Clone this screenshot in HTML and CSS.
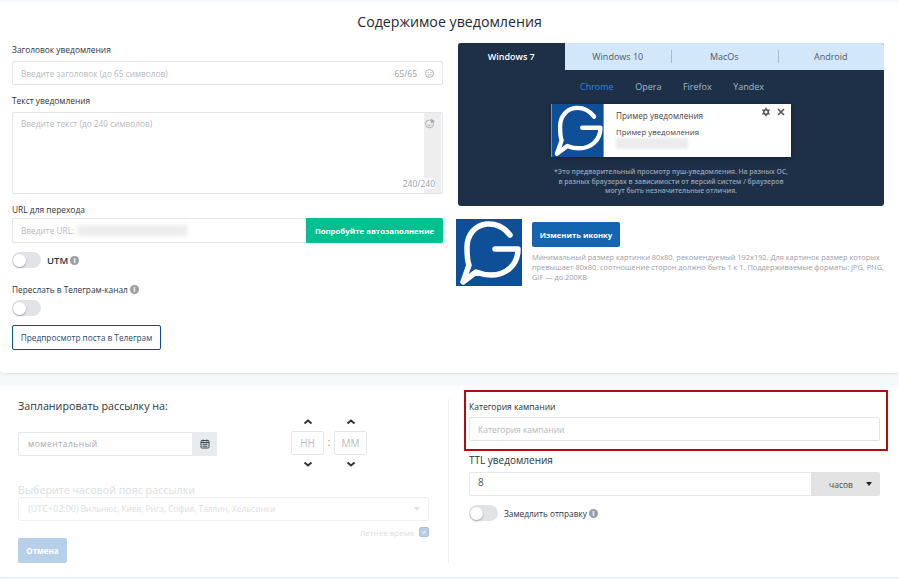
FILE: index.html
```html
<!DOCTYPE html>
<html lang="ru">
<head>
<meta charset="utf-8">
<title>Содержимое уведомления</title>
<link rel="stylesheet" href="styles.css">
</head>
<body>
<svg class="defs" width="0" height="0" aria-hidden="true">
  <symbol id="logo" viewBox="0 0 66 67">
    <rect width="66" height="67" fill="#0f4f98"/>
    <path d="M54 16C48 8 40 4.500 31 5C19 6 11 16 11 28C11 35 11 41 13 46L7 63L20 53C25 55 30 56 35 56C50 56 62 46 62 30L39 30" fill="none" stroke="#fff" stroke-width="5.500" stroke-linejoin="round" stroke-linecap="round"/>
  </symbol>
</svg>
<main class="page">
  <section class="card card-top">
    <h1 class="title">Содержимое уведомления</h1>
    <div class="top-grid">
      <div class="left">
        <label class="lbl lbl-first">Заголовок уведомления</label>
        <div class="field field-title">
          <span class="ph">Введите заголовок (до 65 символов)</span>
          <span class="count">65/65</span>
          <svg class="smile" viewBox="0 0 12 12"><circle cx="6" cy="6" r="4.300" fill="none" stroke="#a9a9a9"/><circle cx="4.500" cy="5" r=".7" fill="#a9a9a9"/><circle cx="7.500" cy="5" r=".7" fill="#a9a9a9"/><path d="M4 7.500h4" stroke="#a9a9a9"/></svg>
        </div>
        <label class="lbl lbl-text">Текст уведомления</label>
        <div class="field-area">
          <span class="ph area-ph">Введите текст (до 240 символов)</span>
          <div class="area-side">
            <svg class="smile" viewBox="0 0 12 12"><circle cx="6" cy="6.500" r="4.300" fill="none" stroke="#a9a9a9"/><path d="M4 8h4" stroke="#a9a9a9"/><path d="M7.500 .5L12 3.500L7.500 6z" fill="#a9a9a9"/></svg>
          </div>
          <span class="count area-count">240/240</span>
        </div>
        <label class="lbl lbl-url">URL для перехода</label>
        <div class="url-group">
          <div class="url-input"><span class="ph">Введите URL:</span><span class="blur-url"></span></div>
          <button class="btn-green">Попробуйте автозаполнение</button>
        </div>
        <div class="row row-utm">
          <span class="toggle"></span>
          <span class="utm">UTM</span>
          <span class="info">i</span>
        </div>
        <div class="row row-tg"><span class="lbl-plain">Переслать в Телеграм-канал</span><span class="info">i</span></div>
        <span class="toggle toggle-tg"></span>
        <button class="btn-outline">Предпросмотр поста в Телеграм</button>
      </div>
      <div class="right">
        <div class="preview">
          <div class="tabs">
            <span class="tab tab-active">Windows 7</span>
            <span class="tab">Windows 10</span>
            <span class="tab tab-sep">MacOs</span>
            <span class="tab tab-sep">Android</span>
          </div>
          <div class="browsers">
            <span class="browser browser-active">Chrome</span>
            <span class="browser">Opera</span>
            <span class="browser">Firefox</span>
            <span class="browser">Yandex</span>
          </div>
          <div class="push">
            <svg class="push-logo"><use href="#logo"/></svg>
            <div class="push-body">
              <div class="push-title">Пример уведомления</div>
              <div class="push-text">Пример уведомления</div>
              <div class="push-blur"></div>
            </div>
            <div class="push-icons">
              <svg class="gear" viewBox="0 0 10 10"><circle cx="5" cy="5" r="2.300" fill="none" stroke="#555" stroke-width="1.600"/><path d="M5 .8v1.600M5 7.600v1.600M1.400 2.900l1.400.8M7.200 6.300l1.400.8M1.400 7.100l1.400-.8M7.200 3.700l1.400-.8" stroke="#555" stroke-width="1.500"/></svg>
              <svg class="close" viewBox="0 0 10 10"><path d="M2 2l6 6M8 2l-6 6" stroke="#555" stroke-width="1.600"/></svg>
            </div>
          </div>
          <p class="note">*Это предварительный просмотр пуш-уведомления. На разных ОС,<br>в разных браузерах в зависимости от версий систем / браузеров<br>могут быть незначительные отличия.</p>
        </div>
        <div class="icon-row">
          <svg class="big-logo"><use href="#logo"/></svg>
          <div class="icon-info">
            <button class="btn-blue">Изменить иконку</button>
            <p class="help">Минимальный размер картинки 80x80, рекомендуемый 192x192. Для картинок размер которых превышает 80x80, соотношение сторон должно быть 1 к 1. Поддерживаемые форматы: JPG, PNG, GIF — до 200KB</p>
          </div>
        </div>
      </div>
    </div>
  </section>
  <section class="card card-bottom">
    <div class="sched">
      <h2 class="sched-title">Запланировать рассылку на:</h2>
      <div class="sched-row">
        <div class="date-group">
          <div class="date-input">моментальный</div>
          <div class="date-addon">
            <svg viewBox="0 0 10 10" class="cal"><rect x="1" y="1.500" width="8" height="7.500" rx=".7" fill="none" stroke="#3b4650"/><path d="M1 3.500h8" stroke="#3b4650" stroke-width="1.200"/><path d="M3 .5v2M7 .5v2M2.500 5.300h5M2.500 7.200h5" stroke="#3b4650"/></svg>
          </div>
        </div>
        <div class="time">
          <div class="time-col">
            <svg class="chev" viewBox="0 0 10 6"><path d="M1.500 4.500L5 1.500l3.500 3" fill="none" stroke="#333" stroke-width="2"/></svg>
            <span class="time-box">HH</span>
            <svg class="chev" viewBox="0 0 10 6"><path d="M1.500 1.500L5 4.500l3.500-3" fill="none" stroke="#333" stroke-width="2"/></svg>
          </div>
          <span class="colon">:</span>
          <div class="time-col">
            <svg class="chev" viewBox="0 0 10 6"><path d="M1.500 4.500L5 1.500l3.500 3" fill="none" stroke="#333" stroke-width="2"/></svg>
            <span class="time-box">MM</span>
            <svg class="chev" viewBox="0 0 10 6"><path d="M1.500 1.500L5 4.500l3.500-3" fill="none" stroke="#333" stroke-width="2"/></svg>
          </div>
        </div>
      </div>
      <div class="tz-label">Выберите часовой пояс рассылки</div>
      <div class="tz-select"><span class="tz-utc">(UTC+02:00)</span> Вильнюс, Киев, Рига, София, Таллин, Хельсинки<span class="tz-caret"></span></div>
      <div class="summer"><span>Летнее время</span><span class="check"><svg viewBox="0 0 10 10"><path d="M3 5l1.500 1.500L7 3.500" fill="none" stroke="#fff" stroke-width="1.200"/></svg></span></div>
      <button class="btn-cancel">Отмена</button>
    </div>
    <div class="opts">
      <div class="cat-box">
        <div class="cat-label">Категория кампании</div>
        <div class="cat-input">Категория кампании</div>
      </div>
      <div class="ttl-label">TTL уведомления</div>
      <div class="ttl-group">
        <div class="ttl-input">8</div>
        <div class="ttl-addon"><span>часов</span><span class="ttl-caret"></span></div>
      </div>
      <div class="row row-slow">
        <span class="toggle"></span>
        <span class="lbl-plain">Замедлить отправку</span>
        <span class="info">i</span>
      </div>
    </div>
  </section>
</main>
</body>
</html>
```
FILE: styles.css
```css
* { box-sizing: border-box; }
html, body { margin: 0; padding: 0; }
body {
  width: 899px;
  height: 579px;
  overflow: hidden;
  background: #f6f9fc;
  font-family: "Open Sans", "Noto Sans", sans-serif;
  font-size: 9px;
  color: #2c3440;
}
.defs { position: absolute; }
.page { padding-top: 2px; }
.card { background: #fff; }
.card-top {
  height: 371px;
  box-shadow: 0 1px 3px rgba(30, 50, 80, .12);
  border-radius: 0 0 4px 4px;
}
.title {
  margin: 0;
  padding-top: 11px;
  height: 41px;
  text-align: center;
  font-size: 14.200px;
  line-height: 18px;
  font-weight: 400;
  color: #1f2a38;
}
.top-grid { display: flex; }
.left { width: 431px; margin-left: 12px; display: flex; flex-direction: column; align-items: flex-start; }
.right { width: 428px; margin-left: 12px; }

.lbl { display: block; font-size: 8.400px; line-height: 12px; color: #2c3440; font-weight: 500; }
.lbl-first { margin-top: 1px; }
.lbl-text { margin-top: 10px; }
.lbl-url { margin-top: 10px; font-weight: 400; }
.ph { color: #b5b8bd; font-size: 8.300px; }

.field {
  width: 431px;
  height: 24px;
  margin-top: 5px;
  border: 1px solid #e2e5e9;
  border-radius: 2px;
  display: flex;
  align-items: center;
  padding: 0 8px;
}
.count { color: #9b9fa4; font-size: 8.500px; margin-left: auto; }
.smile { width: 11px; height: 11px; margin-left: 7px; margin-right: -1px; display: block; }
.field-area {
  position: relative;
  width: 431px;
  height: 82px;
  margin-top: 5px;
  border: 1px solid #e2e5e9;
  border-radius: 2px;
  display: flex;
  justify-content: space-between;
  padding-left: 8px;
}
.area-ph { padding-top: 5px; }
.area-side { width: 17px; margin-right: 1px; background: #eeeeee; padding-top: 5px; }
.area-side .smile { margin-left: 0; }
.area-count { position: absolute; right: 7px; bottom: 4px; background: #fff; line-height: 11px; padding-left: 1px; }

.url-group { width: 431px; height: 25px; margin-top: 2px; display: flex; }
.url-input {
  flex: 1;
  border: 1px solid #e2e5e9;
  border-right: 0;
  border-radius: 2px 0 0 2px;
  padding: 0 8px;
  display: flex;
  align-items: center;
}
.blur-url { width: 110px; height: 11px; background: #ececec; filter: blur(2px); margin-left: 3px; }
.btn-green {
  width: 137px;
  border: 0;
  background: #00c08f;
  color: #fff;
  font: 700 7.800px "Open Sans", sans-serif;
  padding: 0;
  border-radius: 0 2px 2px 0;
}
.row { display: flex; align-items: center; }
.row-utm { margin-top: 9px; height: 16px; }
.toggle {
  position: relative;
  display: block;
  width: 29px;
  height: 16px;
  border-radius: 8px;
  background: #e2e3e7;
  flex: none;
}
.toggle::after {
  content: "";
  position: absolute;
  left: 1px;
  top: 1.500px;
  width: 13px;
  height: 13px;
  border-radius: 50%;
  background: #fff;
  box-shadow: 0 1px 2px rgba(0, 0, 0, .3);
}
.utm { margin-left: 6px; font-size: 9.500px; font-weight: 600; color: #2c3440; }
.info {
  width: 9px;
  height: 9px;
  margin-left: 2px;
  border-radius: 50%;
  background: #9c9ea3;
  color: #fff;
  font: 700 7px/9px "Open Sans", sans-serif;
  text-align: center;
  flex: none;
}
.row-tg { margin-top: 15px; height: 12px; }
.lbl-plain { font-size: 8.300px; color: #2c3440; font-weight: 500; }
.toggle-tg { margin-top: 5px; }
.btn-outline {
  margin-top: 9px;
  width: 149px;
  height: 25px;
  background: #fff;
  border: 1px solid #0f4f98;
  border-radius: 2px;
  color: #2d4a70;
  font: 500 8.300px "Open Sans", sans-serif;
  padding: 0;
}

.preview {
  width: 426px;
  height: 163px;
  margin-left: 3px;
  background: #1e3048;
  border-radius: 3px;
  display: flex;
  flex-direction: column;
}
.tabs { display: flex; height: 27px; background: #d3e7fb; border-radius: 3px 3px 0 0; }
.tab {
  width: 106.500px;
  display: flex;
  align-items: center;
  justify-content: center;
  font-size: 9px;
  color: #4d5a68;
  position: relative;
}
.tab-active { background: #1e3048; color: #fff; font-weight: 600; border-radius: 3px 0 0 0; }
.tab-sep::before {
  content: "";
  position: absolute;
  left: 0;
  top: 7px;
  height: 13px;
  width: 1px;
  background: #a9bccf;
}
.browsers { display: flex; justify-content: center; gap: 21.500px; height: 34px; padding-top: 11px; padding-left: 2px; font-size: 9px; line-height: 12px; }
.browser { color: #a4b8cd; }
.browser-active { color: #2a80ff; }
.push {
  width: 240px;
  height: 53px;
  margin-left: 93px;
  background: #fff;
  display: flex;
  position: relative;
  box-shadow: 0 1px 4px rgba(0, 0, 0, .35);
}
.push-logo { width: 53px; height: 53px; display: block; flex: none; }
.push-body { padding: 6px 0 0 12px; color: #444; }
.push-title { font-size: 8.200px; line-height: 11px; }
.push-text { font-size: 7.800px; line-height: 11px; margin-top: 6px; }
.push-blur { width: 72px; height: 11px; background: #ececec; filter: blur(1.500px); }
.push-icons { position: absolute; top: 3px; right: 5px; display: flex; gap: 5px; }
.gear, .close { width: 10px; height: 10px; display: block; }
.note {
  margin: 10px 0 0;
  text-align: center;
  color: #93a3b4;
  font-size: 6.800px;
  line-height: 9.500px;
  font-weight: 600;
}
.icon-row { display: flex; margin-top: 13px; margin-left: 1px; }
.big-logo { width: 66px; height: 67px; display: block; flex: none; }
.icon-info { margin-left: 10px; padding-top: 3px; width: 351px; }
.btn-blue {
  display: block;
  width: 88px;
  height: 25px;
  background: #1265ae;
  color: #fff;
  border: 0;
  border-radius: 2px;
  font: 700 7.700px "Open Sans", sans-serif;
  padding: 0;
}
.help { margin: 5px -4px 0 0; font-size: 7.400px; line-height: 10px; color: #9a9ea4; }

.card-bottom {
  height: 191px;
  margin-top: 13px;
  display: flex;
  box-shadow: 0 1px 2px rgba(30, 50, 80, .08);
}
.sched { width: 449px; margin-top: 13px; height: 164px; border-right: 1px solid #eef0f3; padding-left: 18px; padding-right: 19px; }
.sched-title { margin: 0; font-size: 10.700px; line-height: 14px; font-weight: 400; color: #2c3440; }
.sched-row { display: flex; }
.date-group { display: flex; width: 199px; height: 24px; margin-top: 19px; }
.date-input {
  flex: 1;
  border: 1px solid #e6e8eb;
  border-right: 0;
  border-radius: 2px 0 0 2px;
  color: #a5a9ae;
  font-size: 8.500px;
  letter-spacing: .5px;
  line-height: 22px;
  padding-left: 9px;
}
.date-addon { width: 25px; background: #e9ecef; display: flex; align-items: center; justify-content: center; }
.cal { width: 10px; height: 10px; display: block; }
.time { display: flex; margin-left: 74px; margin-top: 4px; }
.time-col { width: 33px; display: flex; flex-direction: column; align-items: center; }
.chev { width: 10px; height: 6px; display: block; margin: 2px 0; }
.time-box {
  width: 33px;
  height: 24px;
  margin: 4px 0;
  border: 1px solid #e2e5e9;
  border-radius: 2px;
  text-align: center;
  line-height: 22px;
  font-size: 10px;
  color: #b9bdc2;
}
.colon { width: 10px; text-align: center; line-height: 50px; font-size: 10px; color: #8c8c8c; }
.tz-label { margin-top: 14px; font-size: 10.700px; line-height: 14px; color: #dcdee1; }
.tz-select {
  position: relative;
  margin-top: 0;
  height: 24px;
  border: 1px solid #f0f1f3;
  border-radius: 2px;
  padding-left: 9px;
  line-height: 22px;
  font-size: 8.300px;
  color: #dcdee1;
}
.tz-utc { font-size: 9px; }
.tz-caret {
  position: absolute;
  right: 8px;
  top: 9px;
  border: 3.500px solid transparent;
  border-top: 4px solid #e2e3e5;
  border-bottom: 0;
}
.summer { display: flex; justify-content: flex-end; align-items: center; gap: 5px; margin-top: 6px; height: 10px; font-size: 8px; color: #dcdee1; }
.check { width: 10px; height: 10px; background: #b9cfe8; border: 1px solid #a9c0dc; border-radius: 2px; display: block; }
.check svg { display: block; }
.btn-cancel {
  display: block;
  margin-top: 1px;
  width: 49px;
  height: 25px;
  background: #b7cfe8;
  color: #fff;
  border: 0;
  border-radius: 2px;
  font: 700 8px "Open Sans", sans-serif;
  padding: 0;
}

.opts { width: 424px; margin-left: 15px; margin-top: 4px; }
.cat-box { border: 2px solid #b30a0a; height: 61px; padding: 9px 6px 0 3px; }
.cat-label { font-size: 8.500px; line-height: 12px; color: #2c3440; }
.cat-input {
  margin-top: 4px;
  height: 24px;
  border: 1px solid #e2e5e9;
  border-radius: 2px;
  padding-left: 8px;
  line-height: 24px;
  color: #b5b8bd;
  font-size: 8.500px;
}
.ttl-label { margin-left: 5px; margin-top: 3px; font-size: 10px; line-height: 13px; color: #2c3440; }
.ttl-group { display: flex; margin: 5px 8px 0 5px; height: 24px; }
.ttl-input { flex: 1; border: 1px solid #e6e8eb; border-right: 0; border-radius: 2px 0 0 2px; padding-left: 8px; line-height: 19px; font-size: 10px; color: #555; }
.ttl-addon { width: 69px; background: #e3e3e3; border-radius: 0 2px 2px 0; display: flex; align-items: center; justify-content: flex-end; padding-right: 8px; font-size: 8.500px; color: #4a4a4a; gap: 13px; }
.ttl-caret { border: 3.500px solid transparent; border-top: 4px solid #222; border-bottom: 0; }
.row-slow { margin: 9px 0 0 5px; height: 16px; }
.row-slow .lbl-plain { margin-left: 6px; }
```
